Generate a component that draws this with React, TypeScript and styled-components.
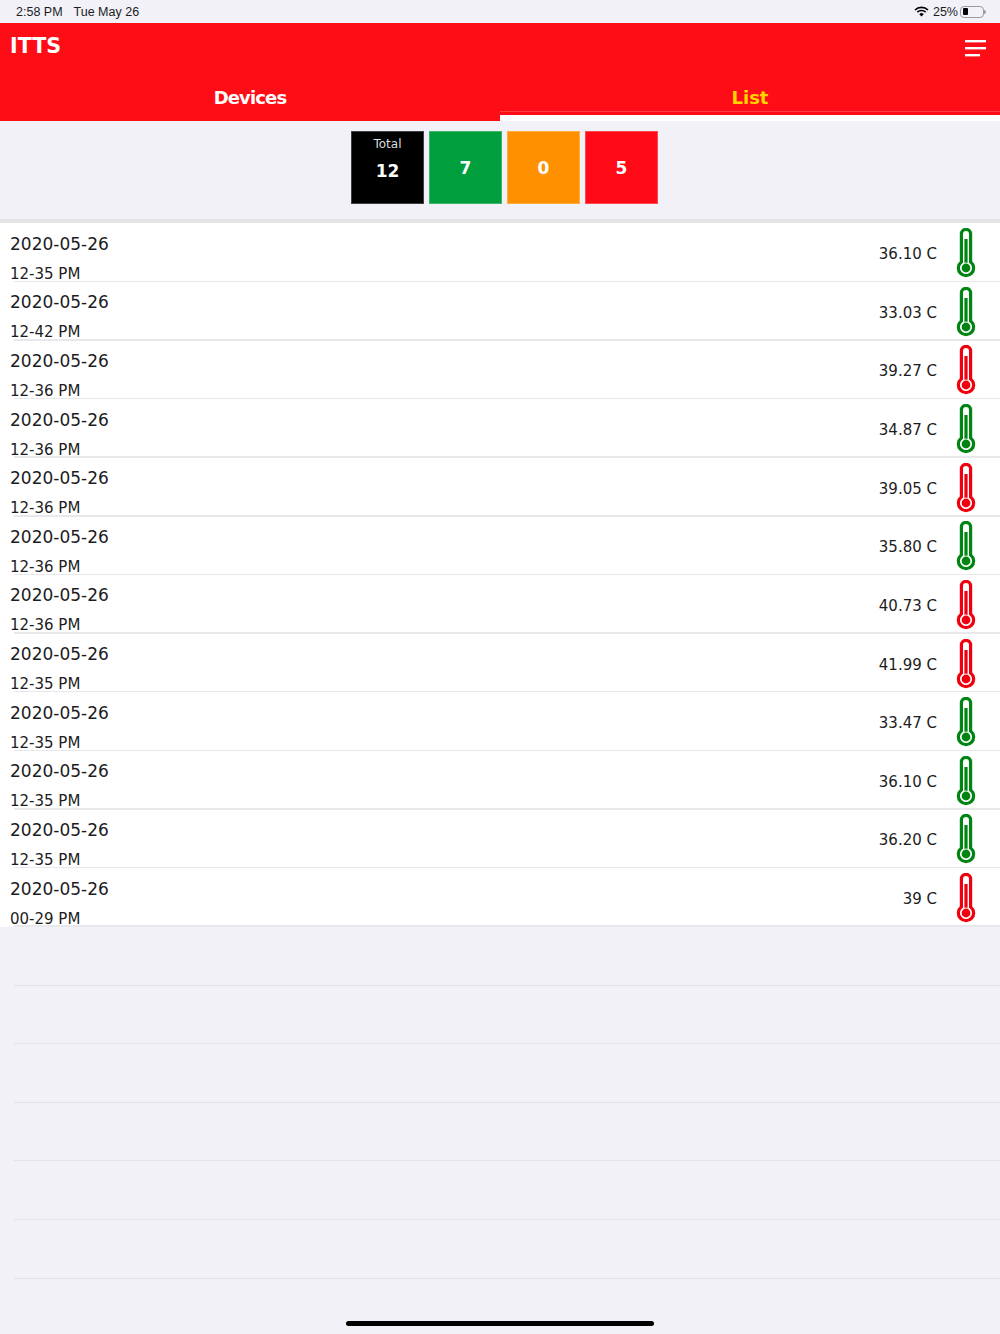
import React from 'react';
import styled, { createGlobalStyle } from 'styled-components';

const Global = createGlobalStyle`
  html, body { margin: 0; padding: 0; background: #f1f1f7; }
  #root { width: 1000px; height: 1334px; }
`;
const Page = styled.div`
  position: relative;
  width: 1000px;
  height: 1334px;
  overflow: hidden;
  background: #f1f1f7;
  font-family: "DejaVu Sans", Verdana, sans-serif;
`;
const StatusBar = styled.div`
  height: 23px;
  display: flex;
  align-items: center;
  justify-content: space-between;
  padding: 0 14px 0 16px;
  font-family: "Liberation Sans", Arial, sans-serif;
  font-size: 12.5px;
  color: #1c1c1e;
`;
const StatusGroup = styled.div<{ $gap: number }>`
  display: flex;
  align-items: center;
  gap: ${p => p.$gap}px;
`;
const Header = styled.header`
  height: 98px;
  background: #ff0d17;
  display: flex;
  flex-direction: column;
`;
const TitleRow = styled.div`
  flex: 1;
  display: flex;
  justify-content: space-between;
  align-items: flex-start;
  padding: 11px 14px 0 10px;
`;
const Title = styled.div`
  font-family: "DejaVu Sans", sans-serif;
  font-size: 20.6px;
  line-height: 24px;
  font-weight: 700;
  color: #fff;
`;
const Menu = styled.svg`
  margin-top: 5px;
  display: block;
`;
const Tabs = styled.div`
  display: flex;
  height: 48px;
`;
const Tab = styled.div<{ $active?: boolean }>`
  flex: 1;
  box-sizing: border-box;
  padding-top: 13px;
  text-align: center;
  font-size: 18px;
  line-height: 24px;
  font-weight: 700;
  letter-spacing: ${p => (p.$active ? '0' : '-0.85px')};
  color: ${p => (p.$active ? '#ffd400' : '#fff')};
  background: ${p =>
    p.$active
      ? 'linear-gradient(#ff0d17 0 38px, #ff4040 38px 39.5px, #ff0d17 39.5px 42.5px, #fff 42.5px)'
      : 'transparent'};
`;
const TileBar = styled.div`
  height: 102.4px;
  box-sizing: border-box;
  padding: 10px 0 0 9px;
  display: flex;
  justify-content: center;
  gap: 5px;
  border-bottom: 4px solid #e4e4e6;
`;
const Tile = styled.div<{ $bg: string }>`
  width: 73px;
  height: 73px;
  box-sizing: border-box;
  background: ${p => p.$bg};
  border: 1px solid rgba(255, 255, 255, 0.25);
  color: #fff;
  display: flex;
  flex-direction: column;
  align-items: center;
  justify-content: center;
  font-size: 17px;
  font-weight: 700;
  line-height: 20px;
`;
const TotalTile = styled(Tile)`
  justify-content: flex-start;
  padding: 5px 0 0;
`;
const TileLabel = styled.div`
  font-size: 12px;
  font-weight: 400;
  line-height: 14px;
  margin-bottom: 10px;
  color: #ddd;
`;
const List = styled.div`
  background: #fff;
`;
const Row = styled.div`
  position: relative;
  box-sizing: border-box;
  height: 58.64px;
  display: flex;
  align-items: center;
  justify-content: space-between;
  padding: 0 24px 0 10px;
  color: #1c1c1e;
  &::after {
    content: '';
    position: absolute;
    left: 14px;
    right: 0;
    bottom: 0;
    height: 1.5px;
    background: #e8e8ec;
  }
`;
const DateBlock = styled.div`
  display: flex;
  flex-direction: column;
  position: relative;
  z-index: 1;
`;
const DateText = styled.div`
  font-size: 17px;
  line-height: 22px;
  margin-bottom: 10px;
`;
const TimeText = styled.div`
  font-size: 15px;
  line-height: 18px;
  margin-bottom: -10px;
`;
const Reading = styled.div`
  display: flex;
  align-items: center;
  gap: 19px;
  font-size: 15px;
  padding-top: 3px;
`;
const ThermometerIcon = styled.svg`
  display: block;
  margin-top: -2px;
`;
const Empty = styled.div`
  height: 58.64px;
  box-sizing: border-box;
  margin-left: 14px;
  border-bottom: 1.5px solid #e2e2e8;
`;
const HomeBar = styled.div`
  position: absolute;
  left: 346px;
  bottom: 8px;
  width: 308px;
  height: 5px;
  border-radius: 3px;
  background: #000;
`;
const Battery = styled.div`
  position: relative;
  width: 24px;
  height: 12px;
  box-sizing: border-box;
  border: 1px solid #9a9a9f;
  border-radius: 4px;
  padding: 1.5px 2px;
  margin-left: -2px;
  margin-right: 2px;
  &::after {
    content: '';
    position: absolute;
    right: -3px;
    top: 3px;
    width: 2px;
    height: 4px;
    border-radius: 0 2px 2px 0;
    background: #9a9a9f;
  }
`;
const BatteryLevel = styled.div`
  width: 5px;
  height: 100%;
  background: #000;
  border-radius: 1px;
`;

const Thermometer = ({ color }: { color: string }) => (
  <ThermometerIcon width="20" height="50" viewBox="0 0 20 50">
    <path
      d="M5.4 34V6a4.6 4.6 0 0 1 9.2 0v28a7.6 7.6 0 1 1-9.2 0Z"
      fill="#fff"
      stroke={color}
      strokeWidth="3.2"
    />
    <path d="M8.4 11h3.2v25h-3.2Z" fill={color} />
    <circle cx="10" cy="40" r="5" fill={color} stroke="#fff" strokeWidth="1.2" />
  </ThermometerIcon>
);

const GREEN = '#008512';
const RED = '#f0000f';
const rows: [string, string, string][] = [
  ['12-35 PM', '36.10 C', GREEN],
  ['12-42 PM', '33.03 C', GREEN],
  ['12-36 PM', '39.27 C', RED],
  ['12-36 PM', '34.87 C', GREEN],
  ['12-36 PM', '39.05 C', RED],
  ['12-36 PM', '35.80 C', GREEN],
  ['12-36 PM', '40.73 C', RED],
  ['12-35 PM', '41.99 C', RED],
  ['12-35 PM', '33.47 C', GREEN],
  ['12-35 PM', '36.10 C', GREEN],
  ['12-35 PM', '36.20 C', GREEN],
  ['00-29 PM', '39 C', RED],
];

export default function App() {
  return (
    <Page>
      <Global />
      <StatusBar>
        <StatusGroup $gap={11}>
          <span>2:58 PM</span>
          <span>Tue May 26</span>
        </StatusGroup>
        <StatusGroup $gap={4}>
          <svg width="15" height="11" viewBox="0 0 15 11" style={{ display: 'block' }}>
            <path d="M1 4a9.2 9.2 0 0 1 13 0" fill="none" stroke="#000" strokeWidth="1.7" />
            <path d="M3.3 6.2a6 6 0 0 1 8.4 0" fill="none" stroke="#000" strokeWidth="1.7" />
            <path d="M5.3 8.2a3 3 0 0 1 4.4 0L7.5 10.6Z" fill="#000" />
          </svg>
          <span>25%</span>
          <Battery>
            <BatteryLevel />
          </Battery>
        </StatusGroup>
      </StatusBar>
      <Header>
        <TitleRow>
          <Title>ITTS</Title>
          <Menu width="21" height="18" viewBox="0 0 21 18">
            <rect x="0" y="1" width="21" height="2.4" fill="#fff" />
            <rect x="0" y="8" width="21" height="2.4" fill="#fff" />
            <rect x="0" y="15" width="15" height="2.4" fill="#fff" />
          </Menu>
        </TitleRow>
        <Tabs>
          <Tab>Devices</Tab>
          <Tab $active>List</Tab>
        </Tabs>
      </Header>
      <TileBar>
        <TotalTile $bg="#000">
          <TileLabel>Total</TileLabel>
          12
        </TotalTile>
        <Tile $bg="#009e3d">7</Tile>
        <Tile $bg="#ff9000">0</Tile>
        <Tile $bg="#ff0a16">5</Tile>
      </TileBar>
      <List>
        {rows.map(([time, temp, color], i) => (
          <Row key={i}>
            <DateBlock>
              <DateText>2020-05-26</DateText>
              <TimeText>{time}</TimeText>
            </DateBlock>
            <Reading>
              <span>{temp}</span>
              <Thermometer color={color} />
            </Reading>
          </Row>
        ))}
      </List>
      {[0, 1, 2, 3, 4, 5].map(i => (
        <Empty key={i} />
      ))}
      <HomeBar />
    </Page>
  );
}
